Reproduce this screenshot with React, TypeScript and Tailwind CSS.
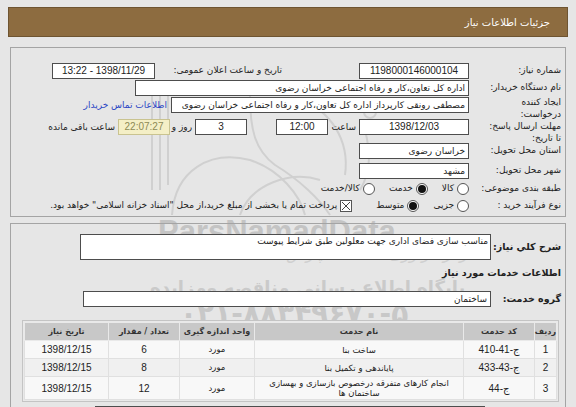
import React from "react";

const box = "h-[16px] border border-[#4d4d4d] bg-white leading-[14px] px-[3px] overflow-hidden whitespace-nowrap";
const num = "font-['Liberation_Sans'] text-[10px] text-center";

function Radio({ on }: { on?: boolean }) {
  return (
    <span className="inline-flex shrink-0 items-center justify-center w-[12px] h-[12px] rounded-full border border-[#555] bg-white">
      {on && <span className="w-[8px] h-[8px] rounded-full bg-[#111]" />}
    </span>
  );
}

const rows = [
  { n: "1", code: "ج-41-410", name: "ساخت بنا", unit: "مورد", qty: "6", date: "1398/12/15" },
  { n: "2", code: "ج-43-433", name: "پایاندهی و تکمیل بنا", unit: "مورد", qty: "8", date: "1398/12/15" },
  {
    n: "3",
    code: "ج-44",
    name: "انجام کارهای متفرقه درخصوص بازسازی و بهسازی ساختمان ها",
    unit: "مورد",
    qty: "12",
    date: "1398/12/15",
  },
];

function Watermark() {
  return (
    <div className="absolute inset-0 pointer-events-none select-none">
      <svg className="absolute left-0 top-0" width="576" height="407" fill="none" stroke="#d0d0d0" strokeWidth="2">
        <path d="M152 95 V190 M160 95 V190 M168 95 V185" />
        <path d="M250 95 C250 130 255 150 275 165 C300 180 320 200 330 215" />
        <path d="M172 215 C175 170 210 150 250 160 C280 170 300 195 305 215" />
        <path d="M240 215 C250 185 290 170 320 180" />
        <path d="M300 100 C330 110 350 140 345 175" />
        <circle cx="370" cy="112" r="6" />
        <path d="M365 130 C370 150 372 170 360 190" />
      </svg>
      <div
        className="absolute left-[158px] top-[216px] text-[31px] font-bold text-[#c4c4c4] leading-none"
        style={{ fontFamily: "'Liberation Sans', Arial, sans-serif" }}
      >
        ParsNamadData
      </div>
      <div dir="rtl" className="absolute left-[205px] top-[246px] text-[16px] italic text-[#d0d0d0] leading-none">
        مرکز فراوری اطلاعات پارس نماد داده ها
      </div>
      <div dir="rtl" className="absolute left-[150px] top-[279px] text-[18px] font-bold text-[#cacaca] leading-none">
        پایگاه اطلاع رسانی مناقصه ومزایده
      </div>
      <div className="absolute left-[180px] top-[300px] text-[28px] font-bold text-[#c8c8c8] leading-none">
        ۰۲۱-۸۸۳۴۹۶۷۰-۵
      </div>
    </div>
  );
}

export default function App() {
  return (
    <div
      dir="rtl"
      className="relative w-[576px] h-[407px] overflow-hidden bg-[#e6e6e6] text-[9px] text-[#222]"
      style={{ fontFamily: "'DejaVu Sans', sans-serif" }}
    >
      <Watermark />
      <div className="relative whitespace-nowrap">
        <header className="mx-[8px] mt-[7px] h-[30px] bg-[#8d6c40] border border-[#6e5431] flex items-center pr-[17px]">
          <h1 className="text-white text-[10px] font-normal">جزئیات اطلاعات نیاز</h1>
        </header>

        <section className="mx-[10px] mt-[10px] h-[170px] border border-[#a4a4a4] pr-[4px] pt-[14px]">
          <div className="flex items-center h-[18px]">
            <span className="w-[92px]">شماره نیاز:</span>
            <span className={`${box} ${num} w-[110px]`}>1198000146000104</span>
            <span className="w-[127px] mr-[77px]">تاریخ و ساعت اعلان عمومی:</span>
            <span className={`${box} ${num} w-[103px]`}>1398/11/29 - 13:22</span>
          </div>
          <div className="flex items-center h-[16px]">
            <span className="w-[92px]">نام دستگاه خریدار:</span>
            <span className={`${box} w-[334px]`}>اداره کل تعاون،کار و رفاه اجتماعی خراسان رضوی</span>
          </div>
          <div className="flex items-start h-[22px]">
            <span className="w-[92px] leading-[12px]">
              ایجاد کننده
              <br />
              درخواست:
            </span>
            <span className={`${box} w-[298px] mt-[1px] tracking-[-0.2px]`}>
              مصطفی  رونقی کارپرداز اداره کل تعاون،کار و رفاه اجتماعی خراسان رضوی
            </span>
            <span className="mr-[4px] mt-[1px] text-[#2a45c4] leading-[16px]">اطلاعات تماس خریدار</span>
          </div>
          <div className="flex items-start h-[24px]">
            <span className="w-[92px] leading-[12px] mt-[2px]">
              مهلت ارسال پاسخ:
              <br />
              تا تاریخ:
            </span>
            <span className={`${box} ${num} w-[110px] mt-[1px]`}>1398/12/03</span>
            <span className="w-[28px] mr-[3px] mt-[1px] leading-[16px]">ساعت</span>
            <span className={`${box} ${num} w-[52px] mt-[1px]`}>12:00</span>
            <span className={`${box} ${num} w-[52px] mr-[29px] mt-[1px]`}>3</span>
            <span className="mr-[3px] mt-[1px] w-[22px] leading-[16px]">روز و</span>
            <span className="h-[16px] w-[52px] mt-[1px] border border-[#c9c390] bg-[#f4efc6] text-[#8c8a55] text-center leading-[14px] text-[10px] font-['Liberation_Sans']">
              22:07:27
            </span>
            <span className="mr-[3px] mt-[1px] leading-[16px]">ساعت باقی مانده</span>
          </div>
          <div className="flex items-center h-[18px]">
            <span className="w-[92px]">استان محل تحویل:</span>
            <span className={`${box} w-[110px]`}>خراسان رضوی</span>
          </div>
          <div className="flex items-center h-[20px] pt-[2px]">
            <span className="w-[92px]">شهر محل تحویل:</span>
            <span className={`${box} w-[110px]`}>مشهد</span>
          </div>
          <div className="flex items-center h-[17px]">
            <span className="w-[92px]">طبقه بندی موضوعی:</span>
            <Radio />
            <span className="mr-[3px]">کالا</span>
            <span className="mr-[14px] flex">
              <Radio on />
            </span>
            <span className="mr-[3px]">خدمت</span>
            <span className="mr-[14px] flex">
              <Radio />
            </span>
            <span className="mr-[3px]">کالا/خدمت</span>
          </div>
          <div className="flex items-center h-[18px]">
            <span className="w-[92px]">نوع فرآیند خرید :</span>
            <Radio />
            <span className="mr-[3px]">جزیی</span>
            <span className="mr-[14px] flex">
              <Radio on />
            </span>
            <span className="mr-[3px]">متوسط</span>
            <span className="mr-[24px] w-[12px] h-[12px] shrink-0 border border-[#555] bg-white flex items-center justify-center">
              <svg width="10" height="10" viewBox="0 0 10 10" stroke="#444" strokeWidth="1">
                <path d="M1 1 L9 9 M9 1 L1 9" />
              </svg>
            </span>
            <span className="mr-[3px]">پرداخت تمام یا بخشی از مبلغ خرید،از محل "اسناد خزانه اسلامی" خواهد بود.</span>
          </div>
        </section>

        <section className="mx-[10px] mt-[6px] h-[200px] border border-[#a4a4a4] pr-[4px] pt-[10px]">
          <div className="flex items-center">
            <span className="w-[70px] font-bold text-[9.5px]">شرح کلي نياز:</span>
            <div className="h-[26px] w-[411px] border border-[#4d4d4d] bg-white px-[2px] leading-[13px]">
              مناسب سازی فضای اداری جهت معلولین طبق شرایط پیوست
            </div>
          </div>
          <div className="mt-[6px] font-bold text-[9.5px] h-[14px] leading-[14px]">اطلاعات خدمات مورد نیاز</div>
          <div className="flex items-center mt-[11px]">
            <span className="w-[70px] font-bold text-[9.5px]">گروه خدمت:</span>
            <span className={`${box} w-[408px] h-[15px]`}>ساختمان</span>
          </div>
          <div className="mt-[13px] ml-[11px] mr-[2px] border border-[#c4c4c4] bg-[#e9e9e9] p-[1px]">
            <table className="w-full border-collapse text-center text-[8.5px] table-fixed">
              <colgroup>
                <col className="w-[22px]" />
                <col className="w-[71px]" />
                <col className="w-[209px]" />
                <col className="w-[75px]" />
                <col className="w-[71px]" />
                <col />
              </colgroup>
              <thead>
                <tr className="bg-[#c8c8c8] h-[18px] text-[#333] font-bold text-[8px]">
                  <th className="border border-[#e9e9e9]">ردیف</th>
                  <th className="border border-[#e9e9e9]">کد حدمت</th>
                  <th className="border border-[#e9e9e9]">نام حدمت</th>
                  <th className="border border-[#e9e9e9]">واحد اندازه گیری</th>
                  <th className="border border-[#e9e9e9]">تعداد / مقدار</th>
                  <th className="border border-[#e9e9e9]">تاریخ نیاز</th>
                </tr>
              </thead>
              <tbody>
                {rows.map((r, i) => (
                  <tr key={r.n} className={i % 2 === 1 ? "bg-[#f0f0f0]" : "bg-[#f8f8f8]"}>
                    <td className={`border border-[#e0e0e0] font-['Liberation_Sans'] text-[10px] ${r.n === "3" ? "h-[23px]" : "h-[18px]"}`}>
                      {r.n}
                    </td>
                    <td className="border border-[#e0e0e0] text-[10px] font-['Liberation_Sans','DejaVu_Sans']">{r.code}</td>
                    <td className="border border-[#e0e0e0] leading-[10px] whitespace-normal px-[1px] tracking-[-0.35px]">{r.name}</td>
                    <td className="border border-[#e0e0e0]">{r.unit}</td>
                    <td className="border border-[#e0e0e0] text-[10px] font-['Liberation_Sans']">{r.qty}</td>
                    <td className="border border-[#e0e0e0] font-['Liberation_Sans'] text-[10px]">{r.date}</td>
                  </tr>
                ))}
              </tbody>
            </table>
          </div>
          <div className="mt-[4px] mr-[76px] w-[390px] h-[20px] border border-[#4d4d4d] bg-white" />
        </section>
      </div>
    </div>
  );
}
